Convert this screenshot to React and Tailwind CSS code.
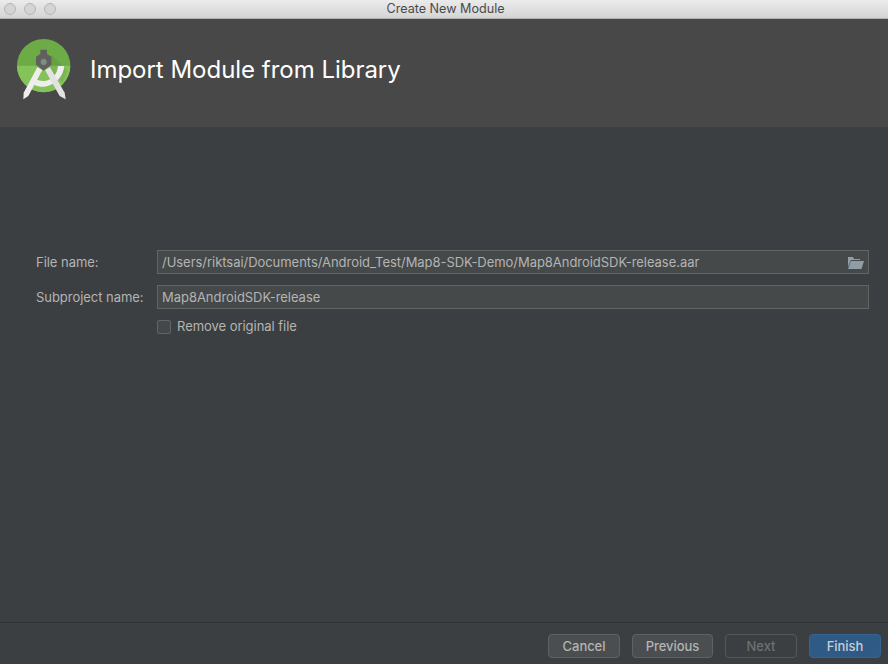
function StudioLogo() {
  return (
    <svg width="64" height="70" viewBox="0 0 192 210" className="block">
      <circle cx="95" cy="95" r="80" fill="#6cab45" />
      <path d="M15 95a80 80 0 0 0 160 0z" fill="#84c25a" />
      <path d="M118 62 L165 108 A80 80 0 0 1 150 146 L108 100z" fill="#000000" opacity="0.06" />
      <path d="M138 96 H157 C153 130 130 152 98 158 C88 159 76 157 66 152 L72 136 C82 141 92 142 102 140 C122 136 136 120 138 96z" fill="#eeeeee" />
      <path d="M76 100 L91 108 L49 186 L34 196 L35 176z" fill="#eeeeee" />
      <path d="M114 100 L99 108 L143 186 L161 196 L158 176z" fill="#e2e2e2" />
      <path d="M85 47 H105 V60 L118 68 V92 L95 110 L72 92 V68 L85 60z" fill="#606060" />
      <circle cx="95" cy="84" r="9" fill="#7f8f7f" />
    </svg>
  );
}

function FolderIcon() {
  return (
    <svg width="16" height="12" viewBox="0 0 16 12" className="block">
      <path d="M0 0h5l1 2h6v1H3L0 10z" fill="#8f9ea6" />
      <path d="M3 4h13l-2.5 8H0z" fill="#8f9ea6" />
    </svg>
  );
}

function Btn({ label, kind }) {
  const base = "h-[24px] rounded-[4px] border flex items-center justify-center pt-[1px] text-[13px] tracking-[-0.05px] font-medium ";
  if (kind === "primary") return <div className={base + "w-[72px] bg-[#2f5a85] border-[#36638f] text-[#c4ced6]"}>{label}</div>;
  if (kind === "disabled") return <div className={base + "w-[72px] bg-[#3c3f41] border-[#565859] text-[#6e7071]"}>{label}</div>;
  return <div className={base + (label === "Previous" ? "w-[81px]" : "w-[72px]") + " bg-[#4a4e50] border-[#5e6264] text-[#b4b4b4]"}>{label}</div>;
}

export default function App() {
  return (
    <div className="w-[888px] h-[664px] flex flex-col bg-[#3c3f41] overflow-hidden font-['Inter','Liberation_Sans',sans-serif]">
      <div className="h-[19px] shrink-0 bg-gradient-to-b from-[#ebebeb] to-[#d5d5d5] border-b border-[#b0b0b0] flex items-center relative">
        <div className="flex gap-[8px] pl-[4px]">
          <span className="w-[12px] h-[12px] rounded-full bg-[#d4d4d4] border border-[#b5b5b5]" />
          <span className="w-[12px] h-[12px] rounded-full bg-[#d4d4d4] border border-[#b5b5b5]" />
          <span className="w-[12px] h-[12px] rounded-full bg-[#d4d4d4] border border-[#b5b5b5]" />
        </div>
        <span className="absolute inset-x-0 pl-[3px] text-center text-[12.6px] leading-[18px] text-[#4a4a4a]">Create New Module</span>
      </div>

      <div className="h-[108px] shrink-0 bg-[#484848] flex items-start pl-[12px] pt-[15px]">
        <StudioLogo />
        <h1 className="ml-[14px] mt-[22px] text-[24px] tracking-[-0.02px] leading-[28px] text-white font-normal">Import Module from Library</h1>
      </div>

      <div className="flex-1 flex flex-col pt-[123px] pl-[36px] pr-[19px] text-[13px] tracking-[-0.04px] text-[#b4b4b4]">
        <div className="flex items-center h-[24px]">
          <label className="w-[121px] pt-[1px]">File name:</label>
          <div className="flex-1 h-[24px] border border-[#646464] bg-[#45494a] flex items-center justify-between pl-[4px] pr-[4px] pt-[1px]">
            <span>/Users/riktsai/Documents/Android_Test/Map8-SDK-Demo/Map8AndroidSDK-release.aar</span>
            <FolderIcon />
          </div>
        </div>
        <div className="flex items-center h-[24px] mt-[11px]">
          <label className="w-[121px] pt-[1px]">Subproject name:</label>
          <div className="flex-1 h-[24px] border border-[#646464] bg-[#45494a] flex items-center pl-[4px] pt-[1px]">Map8AndroidSDK-release</div>
        </div>
        <div className="flex items-center mt-[8px] ml-[121px]">
          <span className="w-[14px] h-[14px] rounded-[2px] border border-[#646464] bg-[#43494a]" />
          <span className="ml-[6px]">Remove original file</span>
        </div>
      </div>

      <div className="h-[42px] shrink-0 border-t border-[#323232] flex items-start justify-end pt-[11px] pr-[7px]">
        <Btn label="Cancel" />
        <div className="w-[12px]" />
        <Btn label="Previous" />
        <div className="w-[12px]" />
        <Btn label="Next" kind="disabled" />
        <div className="w-[12px]" />
        <Btn label="Finish" kind="primary" />
      </div>
    </div>
  );
}
